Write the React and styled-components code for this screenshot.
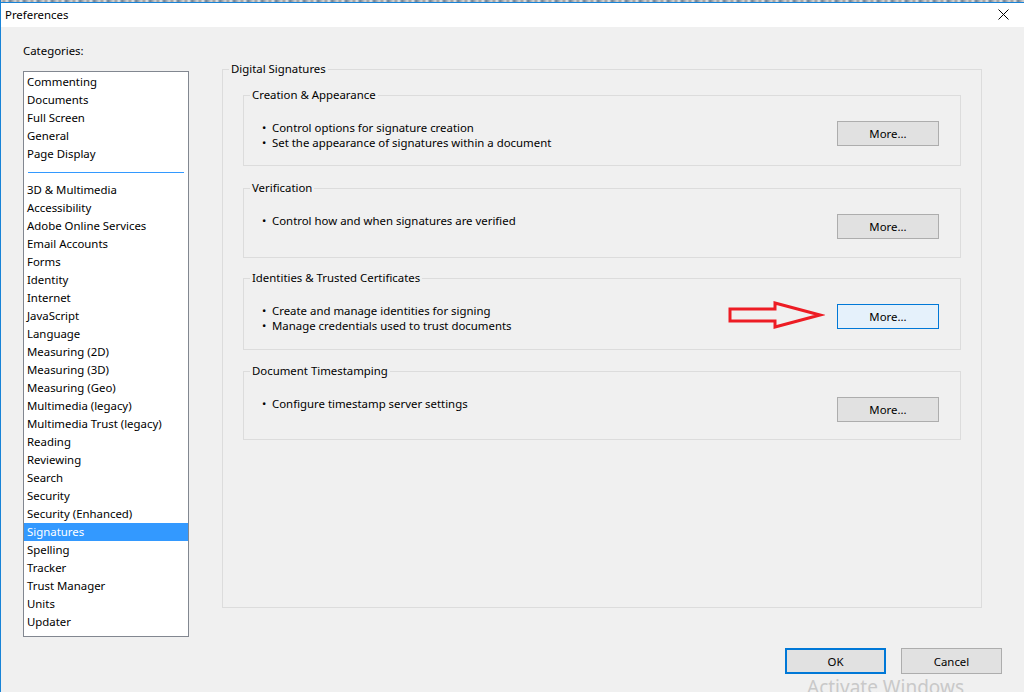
import React from "react";
import styled, { createGlobalStyle } from "styled-components";

const GlobalStyle = createGlobalStyle`
  html, body {
    margin: 0;
    padding: 0;
    background: #f0f0f0;
  }
  body {
    font-family: "Noto Sans", "Segoe UI", sans-serif;
    font-size: 11.4px;
    color: #000;
  }
`;

const Window = styled.div`
  position: relative;
  width: 1024px;
  height: 692px;
  overflow: hidden;
  box-sizing: border-box;
  background: #f0f0f0;
  border-left: 1px solid #1883d7;
`;

const TaskStrip = styled.div`
  height: 2px;
  background: repeating-linear-gradient(
    90deg,
    #d8d8d8 0px,
    #9a9a9a 3px,
    #e8e8e8 6px,
    #6f7f8f 9px,
    #cfcfcf 14px
  );
  border-bottom: 1px solid #1883d7;
`;

const TitleBar = styled.div`
  height: 24px;
  background: #fff;
  display: flex;
  align-items: center;
  justify-content: space-between;
  padding: 0 6px 0 4px;
`;

const Title = styled.span`
  margin-top: -2px;
`;

const CloseButton = styled.div`
  width: 30px;
  height: 24px;
  display: flex;
  align-items: center;
  justify-content: center;
  margin-top: -2px;
`;

const Body = styled.div`
  padding: 16px 22px 0 22px;
`;

const Columns = styled.div`
  display: flex;
  align-items: flex-start;
  gap: 33px;
`;

const LeftColumn = styled.div`
  width: 166px;
`;

const Caption = styled.div`
  line-height: 16px;
  margin-bottom: 12px;
`;

const ListBox = styled.div`
  box-sizing: border-box;
  height: 566px;
  background: #fff;
  border: 1px solid #828790;
  padding-top: 1px;
`;

const ListItem = styled.div`
  height: 18px;
  line-height: 18px;
  padding-left: 3px;
  white-space: nowrap;
  background: ${(p) => (p.$selected ? "#3399ff" : "transparent")};
  color: ${(p) => (p.$selected ? "#fff" : "#000")};
`;

const ListSeparator = styled.div`
  height: 18px;
  display: flex;
  align-items: center;
  padding: 0 4px;
  &::after {
    content: "";
    flex: 1;
    height: 1px;
    background: #3399ff;
  }
`;

const RightColumn = styled.div`
  margin-top: 18px;
`;

const Group = styled.fieldset`
  box-sizing: border-box;
  margin: 0;
  min-width: 0;
  width: 760px;
  height: 547px;
  border: 1px solid #dcdcdc;
  padding: 10px 20px 0 20px;
  display: flex;
  flex-direction: column;
  gap: 13px;
`;

const Legend = styled.legend`
  margin-left: ${(p) => p.$offset}px;
  padding: 0 2px;
  line-height: 16px;
`;

const SubGroup = styled.fieldset`
  margin: 0;
  min-width: 0;
  border: 1px solid #dcdcdc;
  padding: 18px 21px ${(p) => p.$bottom}px 18px;
  margin-top: ${(p) => p.$shift || 0}px;
`;

const SubRow = styled.div`
  display: flex;
  justify-content: space-between;
  align-items: flex-start;
  height: 25px;
`;

const BulletList = styled.div`
  margin-top: -1px;
`;

const Bullet = styled.div`
  line-height: 15px;
  white-space: nowrap;
  display: flex;
  &::before {
    content: "•";
    width: 10px;
  }
`;

const Button = styled.button`
  box-sizing: border-box;
  width: ${(p) => p.$width || 102}px;
  height: ${(p) => p.$height || 25}px;
  font-family: inherit;
  font-size: 11.4px;
  color: #000;
  background: ${(p) => (p.$hover ? "#e5f1fb" : "#e1e1e1")};
  border: ${(p) => (p.$default ? "2px solid #0078d7" : p.$hover ? "1px solid #0078d7" : "1px solid #adadad")};
  border-radius: 0;
  padding: 0;
  cursor: default;
`;

const Footer = styled.div`
  display: flex;
  justify-content: flex-end;
  gap: 15px;
  margin-top: 11px;
`;

const Arrow = styled.svg`
  position: absolute;
  left: 726px;
  top: 300px;
`;

const Watermark = styled.div`
  position: absolute;
  left: 806px;
  top: 674px;
  font-size: 19px;
  color: #c9c9c9;
  white-space: nowrap;
`;

const topItems = ["Commenting", "Documents", "Full Screen", "General", "Page Display"];
const restItems = [
  "3D & Multimedia",
  "Accessibility",
  "Adobe Online Services",
  "Email Accounts",
  "Forms",
  "Identity",
  "Internet",
  "JavaScript",
  "Language",
  "Measuring (2D)",
  "Measuring (3D)",
  "Measuring (Geo)",
  "Multimedia (legacy)",
  "Multimedia Trust (legacy)",
  "Reading",
  "Reviewing",
  "Search",
  "Security",
  "Security (Enhanced)",
  "Signatures",
  "Spelling",
  "Tracker",
  "Trust Manager",
  "Units",
  "Updater",
];

const sections = [
  {
    title: "Creation & Appearance",
    lines: ["Control options for signature creation", "Set the appearance of signatures within a document"],
    bottom: 19,
  },
  {
    title: "Verification",
    lines: ["Control how and when signatures are verified"],
    bottom: 18,
    shift: 1,
  },
  {
    title: "Identities & Trusted Certificates",
    lines: ["Create and manage identities for signing", "Manage credentials used to trust documents"],
    bottom: 20,
    shift: -1,
  },
  {
    title: "Document Timestamping",
    lines: ["Configure timestamp server settings"],
    bottom: 17,
  },
];

export default function App() {
  return (
    <>
      <GlobalStyle />
      <Window>
        <TaskStrip />
        <TitleBar>
          <Title>Preferences</Title>
          <CloseButton>
            <svg width="11" height="11" viewBox="0 0 11 11">
              <path d="M0.5 0.5 L10.5 10.5 M10.5 0.5 L0.5 10.5" stroke="#000" strokeWidth="1" fill="none" />
            </svg>
          </CloseButton>
        </TitleBar>
        <Body>
          <Columns>
            <LeftColumn>
              <Caption>Categories:</Caption>
              <ListBox>
                {topItems.map((t) => (
                  <ListItem key={t}>{t}</ListItem>
                ))}
                <ListSeparator />
                {restItems.map((t) => (
                  <ListItem key={t} $selected={t === "Signatures"}>
                    {t}
                  </ListItem>
                ))}
              </ListBox>
            </LeftColumn>
            <RightColumn>
              <Group>
                <Legend $offset={-14}>Digital Signatures</Legend>
                {sections.map((s, i) => (
                  <SubGroup key={s.title} $bottom={s.bottom} $shift={s.shift}>
                    <Legend $offset={-12}>{s.title}</Legend>
                    <SubRow>
                      <BulletList>
                        {s.lines.map((l) => (
                          <Bullet key={l}>{l}</Bullet>
                        ))}
                      </BulletList>
                      <Button $hover={i === 2}>More...</Button>
                    </SubRow>
                  </SubGroup>
                ))}
              </Group>
            </RightColumn>
          </Columns>
          <Footer>
            <Button $width={101} $height={26} $default>
              OK
            </Button>
            <Button $width={101} $height={26}>
              Cancel
            </Button>
          </Footer>
        </Body>
        <Arrow width="98" height="32" viewBox="0 0 98 32">
          <path
            d="M3 9 L48 9 L48 3 L93 15 L48 27 L48 21 L3 21 Z"
            fill="none"
            stroke="#ed1c24"
            strokeWidth="3"
            strokeLinejoin="miter"
          />
        </Arrow>
        <Watermark>Activate Windows</Watermark>
      </Window>
    </>
  );
}
